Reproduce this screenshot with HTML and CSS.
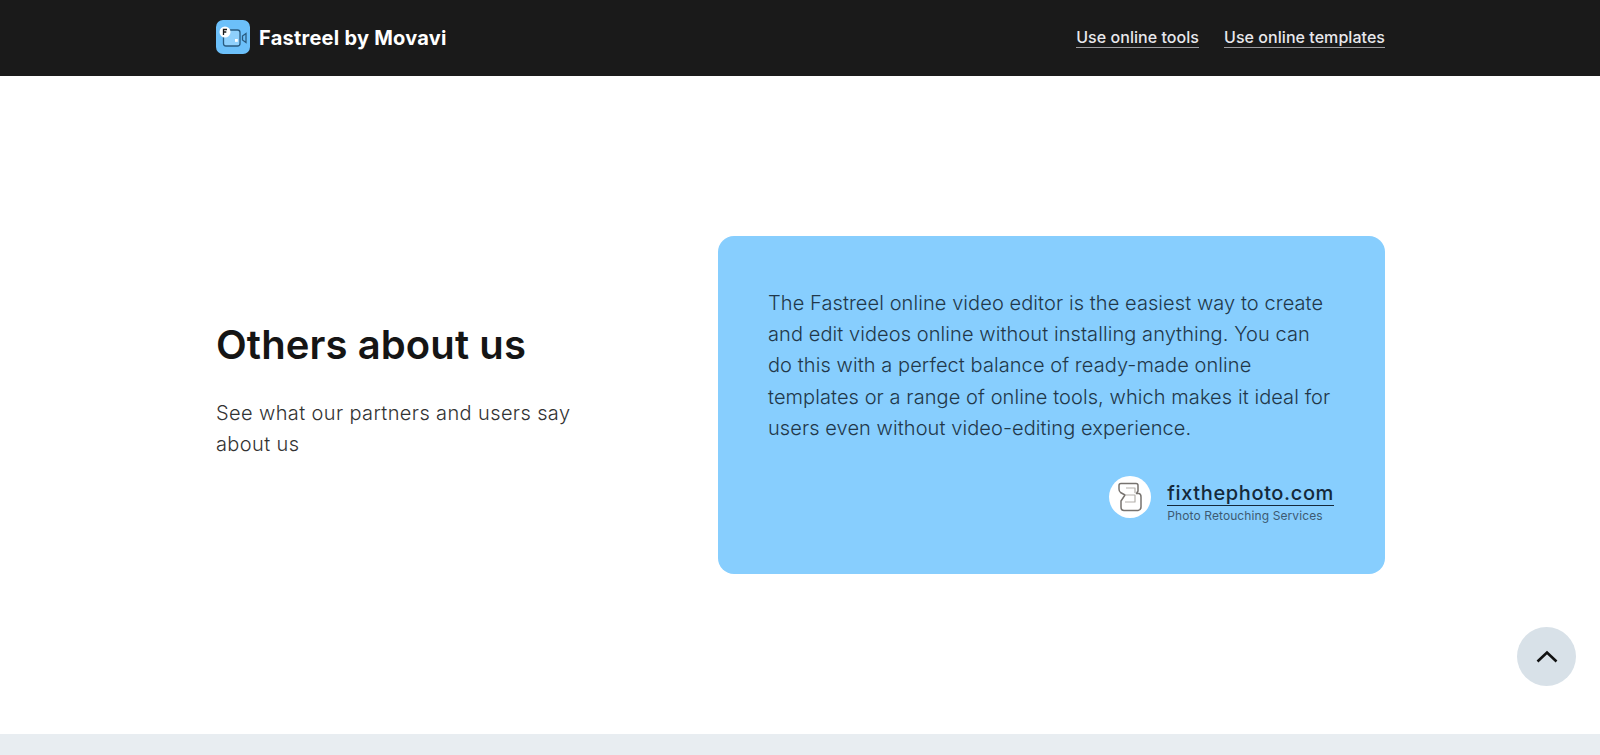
FILE: index.html
```html
<!DOCTYPE html>
<html lang="en">
  <head>
    <meta charset="UTF-8" />
    <meta name="viewport" content="width=device-width, initial-scale=1.0" />
    <title>Fastreel by Movavi</title>
    <link rel="stylesheet" href="styles.css">
  </head>
  <body>
    <header class="header">
      <div class="container header-inner">
        <a class="logo" href="#">
          <svg class="logo-icon" width="34" height="34" viewBox="0 0 34 34">
            <rect width="34" height="34" rx="7" fill="#6cc0fa" />
            <rect x="7.5" y="10" width="16.5" height="16" rx="2.5" fill="#8fd0fc" stroke="#2a5b80" stroke-width="1.3" />
            <path d="M26.5 16l3.5-2.5v9L26.5 20z" fill="none" stroke="#2a5b80" stroke-width="1.3" />
            <rect x="19" y="19" width="2.8" height="2.8" fill="#fff" />
            <circle cx="9" cy="12" r="5.5" fill="#fff" />
            <path d="M7.5 15V9.5h3.5M7.5 12h2.8" fill="none" stroke="#1a1a1a" stroke-width="1.3" />
          </svg>
          <span>Fastreel by Movavi</span>
        </a>
        <nav class="nav">
          <a href="#">Use online tools</a>
          <a href="#">Use online templates</a>
        </nav>
      </div>
    </header>

    <main class="container others">
      <div class="others-text">
        <h2>Others about us</h2>
        <p>See what our partners and users say about us</p>
      </div>
      <div class="quote">
        <p>The Fastreel online video editor is the easiest way to create and edit videos online without installing anything. You can do this with a perfect balance of ready-made online templates or a range of online tools, which makes it ideal for users even without video-editing experience.</p>
        <div class="source">
          <div class="source-icon">
            <svg width="26" height="30" viewBox="0 0 26 30" fill="none" stroke="#77736f" stroke-width="1.5" stroke-linejoin="round">
              <path d="M4 1.5H19Q21 1.5 21 3.5V9L19.5 11.5H22Q24 12 24 15V25Q24 28 21 28.5H7Q4 28.5 4 25V19L8 13 3.5 10.5Q2 9.5 2 7V3.5Q2 1.5 4 1.5Z" />
              <path d="M9 6H18V11M8 13H18V20H8" stroke="#b3b0ab" stroke-width="1.2" />
            </svg>
          </div>
          <div class="source-text">
            <a href="#">fixthephoto.com</a>
            <span>Photo Retouching Services</span>
          </div>
        </div>
      </div>
    </main>

    <a class="to-top" href="#">
      <svg width="22" height="13" viewBox="0 0 22 13" fill="none" stroke="#111" stroke-width="2.6">
        <path d="M1.5 11.5L11 2.5l9.5 9" />
      </svg>
    </a>

    <footer class="footer"></footer>
  </body>
</html>
```

FILE: styles.css
```css
body {
  margin: 0;
  background: #fff;
  font-family: "Inter", "Liberation Sans", sans-serif;
  color: #1a1a1a;
  height: 755px;
  overflow: hidden;
}

a {
  color: inherit;
  text-decoration: none;
}

.container {
  width: 1169px;
  margin: 0 0 0 216px;
}

.header {
  background: #1a1a1a;
  color: #fff;
  height: 76px;
}

.header-inner {
  display: flex;
  justify-content: space-between;
  align-items: center;
  height: 100%;
}

.logo {
  display: flex;
  align-items: center;
  gap: 9px;
  font-size: 20px;
  font-weight: 700;
  letter-spacing: 0.25px;
}

.logo-icon {
  display: block;
  margin-bottom: 2px;
}

.nav {
  display: flex;
  gap: 25px;
  padding-bottom: 2px;
  font-size: 16px;
  font-weight: 500;
  letter-spacing: 0.05px;
  color: #e8e8ec;
}

.nav a {
  border-bottom: 1px solid #9a9a9e;
}

.others {
  display: flex;
  justify-content: space-between;
  align-items: center;
  padding-top: 160px;
}

.others-text {
  width: 370px;
  padding-bottom: 30px;
}

.others-text h2 {
  margin: 0 0 29px;
  font-size: 40px;
  line-height: 48px;
  font-weight: 600;
  color: #151515;
  letter-spacing: 0.1px;
}

.others-text p {
  margin: 0;
  font-size: 20px;
  line-height: 31px;
  font-weight: 300;
  letter-spacing: 0.38px;
  color: #333;
}

.quote {
  box-sizing: border-box;
  width: 667px;
  height: 338px;
  padding: 52px 50px 52px 50px;
  background: #87cefe;
  border-radius: 16px;
}

.quote p {
  margin: 0 0 32px;
  font-size: 20px;
  line-height: 31.2px;
  font-weight: 300;
  letter-spacing: 0.08px;
  color: #22384a;
}

.source {
  display: flex;
  justify-content: flex-end;
  align-items: flex-start;
  gap: 16px;
  padding-right: 1px;
}

.source-icon {
  display: flex;
  justify-content: center;
  align-items: center;
  width: 42px;
  height: 42px;
  background: #fff;
  border-radius: 50%;
}

.source-text {
  display: flex;
  flex-direction: column;
  margin-top: 5px;
}

.source-text a {
  font-size: 20px;
  line-height: 24px;
  font-weight: 500;
  letter-spacing: 0.62px;
  color: #14293a;
  border-bottom: 1px solid #14293a;
}

.source-text span {
  font-size: 12px;
  line-height: 20px;
  letter-spacing: 0.1px;
  color: #3d5a72;
}

.to-top {
  position: absolute;
  left: 1517px;
  top: 627px;
  display: flex;
  justify-content: center;
  align-items: center;
  width: 59px;
  height: 59px;
  background: #d8e1e8;
  border-radius: 50%;
}

.footer {
  position: absolute;
  left: 0;
  right: 0;
  top: 734px;
  height: 21px;
  background: #e8edf1;
}
```
